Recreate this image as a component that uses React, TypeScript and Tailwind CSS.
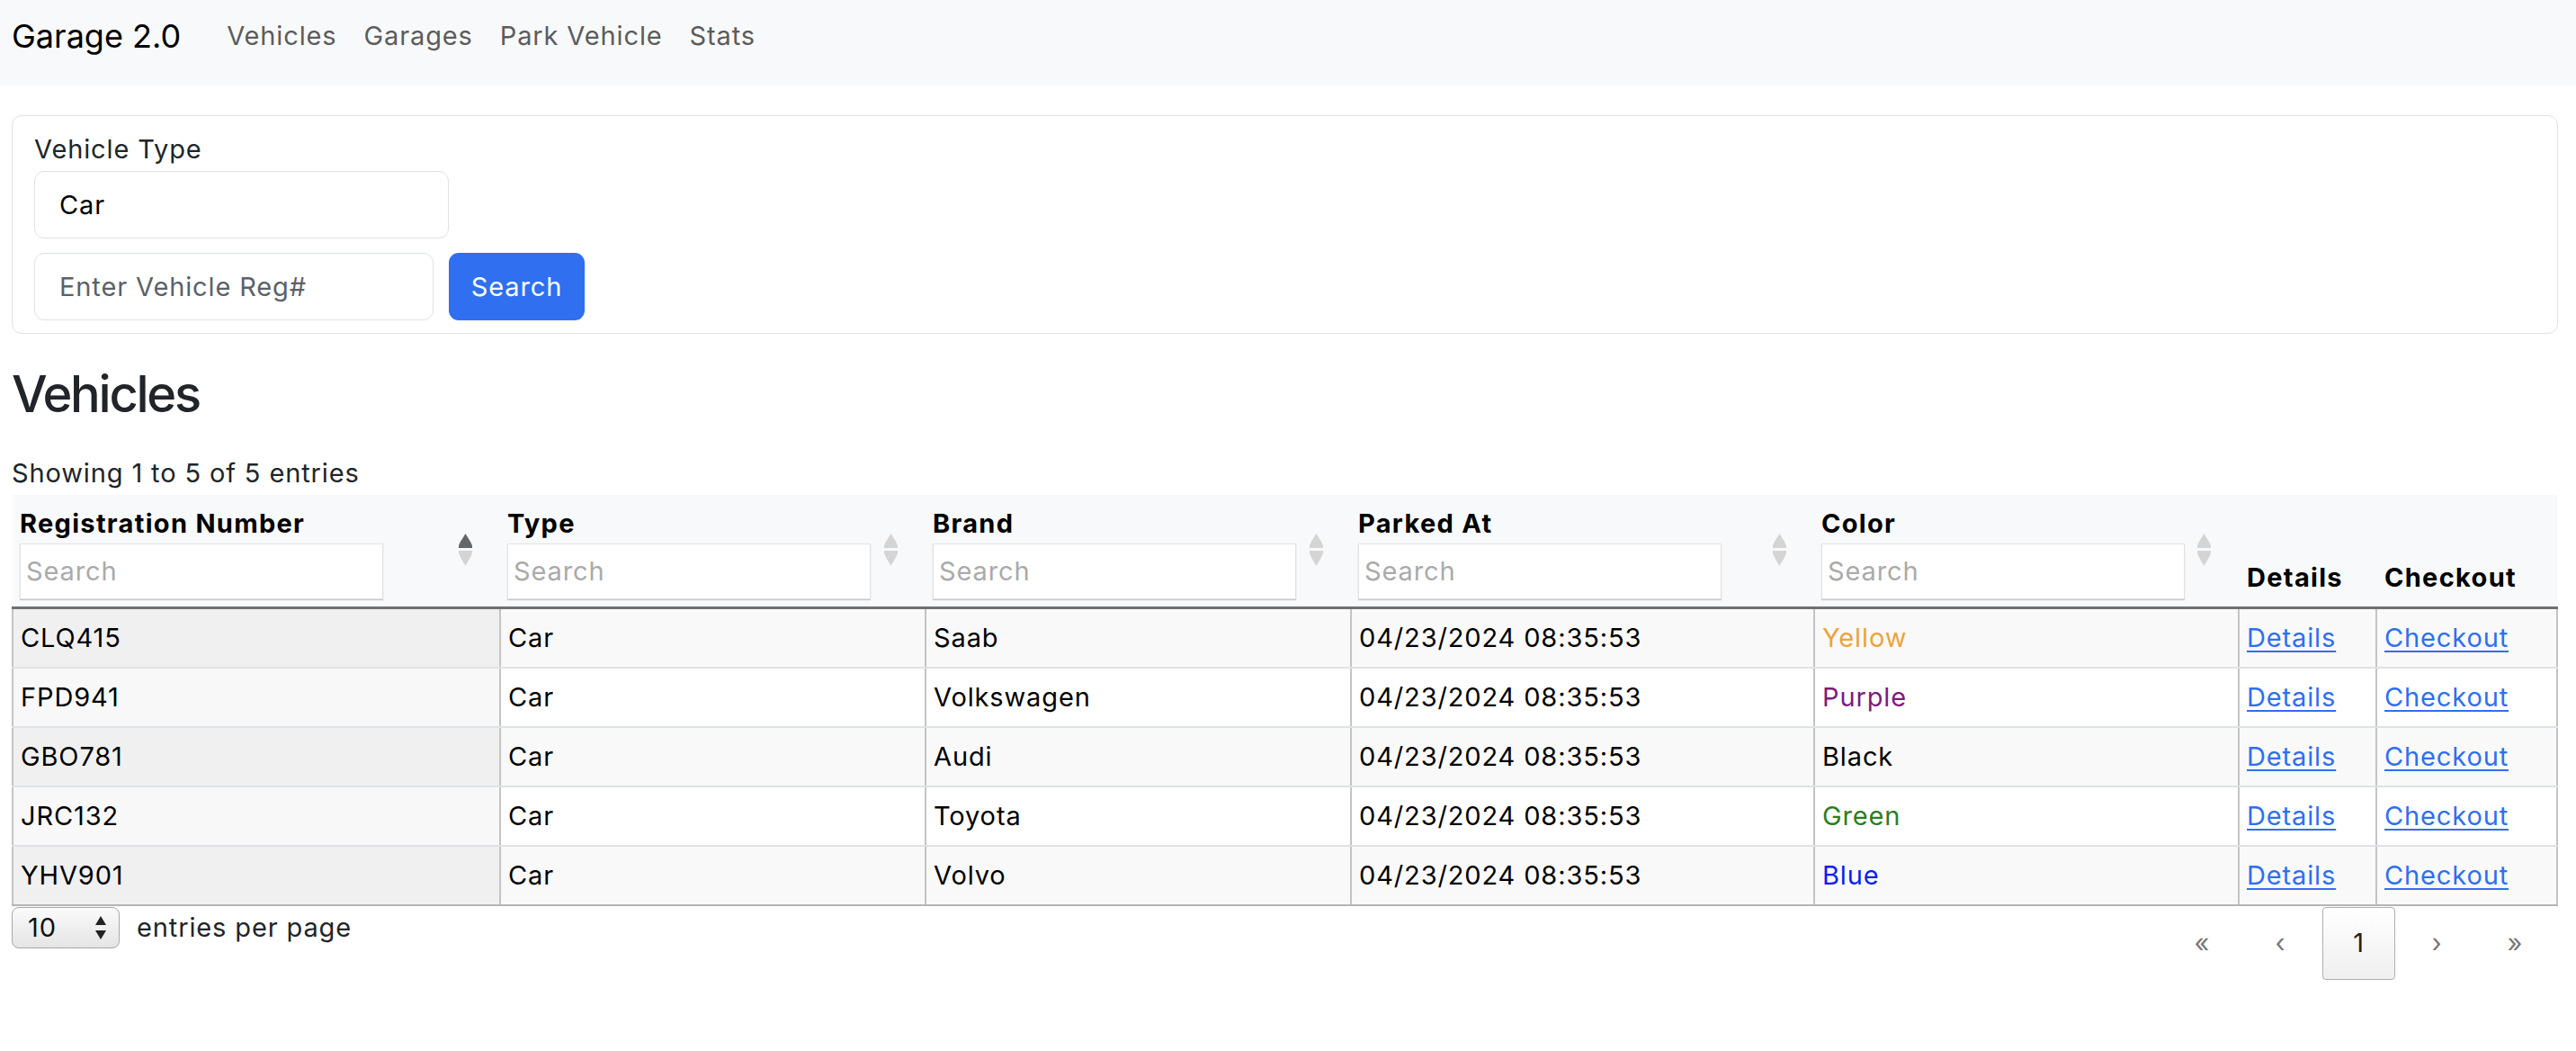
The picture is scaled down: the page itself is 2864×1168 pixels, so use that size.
import React from "react";

type Vehicle = {
    reg: string;
    type: string;
    brand: string;
    parkedAt: string;
    color: string;
    colorClass: string;
};

const vehicles: Vehicle[] = [
    { reg: "CLQ415", type: "Car", brand: "Saab", parkedAt: "04/23/2024 08:35:53", color: "Yellow", colorClass: "text-[#eca43a]" },
    { reg: "FPD941", type: "Car", brand: "Volkswagen", parkedAt: "04/23/2024 08:35:53", color: "Purple", colorClass: "text-[#7e1a7e]" },
    { reg: "GBO781", type: "Car", brand: "Audi", parkedAt: "04/23/2024 08:35:53", color: "Black", colorClass: "text-black" },
    { reg: "JRC132", type: "Car", brand: "Toyota", parkedAt: "04/23/2024 08:35:53", color: "Green", colorClass: "text-[#2b7d1f]" },
    { reg: "YHV901", type: "Car", brand: "Volvo", parkedAt: "04/23/2024 08:35:53", color: "Blue", colorClass: "text-[#0b1ff0]" },
];

const columns = ["Registration Number", "Type", "Brand", "Parked At", "Color"];

function SortArrows({ active }: { active: boolean }) {
    return (
        <svg width="15" height="37" viewBox="0 0 15 37" className="absolute right-[31px] top-[43px]">
            <path d="M7.5 0 C9 3 15 11 15 14 V16 H0 V14 C0 11 6 3 7.5 0Z" fill={active ? "#666666" : "#d4d4d4"} />
            <path d="M0 19 H15 V21 C15 24 9 33 7.5 36 C6 33 0 24 0 21Z" fill="#d4d4d4" />
        </svg>
    );
}

export default function App() {
    return (
        <div className="min-h-screen bg-white font-[Inter,'Liberation_Sans',sans-serif] text-[29px] leading-[1.5] tracking-[0.03em] text-[#212529]">
            {/* navbar */}
            <nav className="h-[95px] bg-[#f8f9fa] flex items-start pt-[13px] pl-[13px]">
                <span className="text-[36px] leading-[54px] tracking-normal text-black mr-[36px]">Garage 2.0</span>
                <div className="flex items-center h-[54px]">
                    {["Vehicles", "Garages", "Park Vehicle", "Stats"].map((l) => (
                        <a key={l} className="px-[15px] text-[#5c5c5c]">
                            {l}
                        </a>
                    ))}
                </div>
            </nav>

            <main className="pl-[13px] pr-[20px]">
                {/* search card */}
                <div className="mt-[33px] border border-[#dee2e6] rounded-[11px] pt-[15px] pb-[14px] pl-[24px]">
                    <div className="h-[44px] mb-[2px]">Vehicle Type</div>
                    <div className="w-[461px] h-[75px] border border-[#dee2e6] rounded-[11px] flex items-center pl-[27px] text-black">
                        Car
                    </div>
                    <div className="flex gap-[17px] mt-[16px]">
                        <div className="w-[444px] h-[75px] border border-[#dee2e6] rounded-[11px] flex items-center pl-[27px] text-[#5c6166]">
                            Enter Vehicle Reg#
                        </div>
                        <button className="w-[151px] h-[75px] rounded-[11px] bg-[#2f6ff0] text-white">Search</button>
                    </div>
                </div>

                <h2 className="mt-[32px] text-[56px] leading-[70px] tracking-[-0.04em] font-medium">Vehicles</h2>
                <div className="mt-[31px] h-[46px]">Showing 1 to 5 of 5 entries</div>

                {/* table */}
                <table className="w-full table-fixed border-collapse text-black">
                    <colgroup>
                        <col className="w-[542px]" />
                        <col className="w-[473px]" />
                        <col className="w-[473px]" />
                        <col className="w-[515px]" />
                        <col className="w-[472px]" />
                        <col className="w-[153px]" />
                        <col />
                    </colgroup>
                    <thead>
                        <tr className="bg-[#f8f9fa]">
                            {columns.map((c, i) => (
                                <th key={c} className="relative text-left align-bottom font-bold tracking-[0.045em] pt-[10px] pb-[8px] pl-[8px] border-b-[3px] border-[#707070]">
                                    <div className="h-[44px] leading-[44px]">{c}</div>
                                    <div className="w-[404px] h-[62px] bg-white border border-[#e2e2e2] shadow-[0_1px_1px_#c8c8c8] flex items-center pl-[6px] font-normal tracking-[0.03em] text-[#aaaaaa]">
                                        Search
                                    </div>
                                    <SortArrows active={i === 0} />
                                </th>
                            ))}
                            <th className="text-left align-bottom font-bold tracking-[0.045em] pl-[9px] pb-[11px] border-b-[3px] border-[#707070]">Details</th>
                            <th className="text-left align-bottom font-bold tracking-[0.045em] pl-[9px] pb-[11px] border-b-[3px] border-[#707070]">Checkout</th>
                        </tr>
                    </thead>
                    <tbody>
                        {vehicles.map((v, i) => {
                            const odd = i % 2 === 0;
                            const last = i === vehicles.length - 1;
                            const rowBg = odd ? "bg-[#f9f9f9]" : "bg-white";
                            const cell = `h-[66px] pl-[8px] border-x-2 border-x-[#c4c4c4] border-b-2 ${last ? "border-b-[#b4b4b4]" : "border-b-[#dee2e6]"}`;
                            return (
                                <tr key={v.reg} className={rowBg}>
                                    <td className={`${cell} ${odd ? "bg-[#f0f0f0]" : "bg-[#f8f8f8]"}`}>{v.reg}</td>
                                    <td className={cell}>{v.type}</td>
                                    <td className={cell}>{v.brand}</td>
                                    <td className={cell}>{v.parkedAt}</td>
                                    <td className={`${cell} ${v.colorClass}`}>{v.color}</td>
                                    <td className={cell}>
                                        <a className="text-[#2f6ff0] underline underline-offset-[4px]">Details</a>
                                    </td>
                                    <td className={cell}>
                                        <a className="text-[#2f6ff0] underline underline-offset-[4px]">Checkout</a>
                                    </td>
                                </tr>
                            );
                        })}
                    </tbody>
                </table>

                {/* footer */}
                <div className="flex justify-between items-start pt-[1px]">
                    <div className="flex items-center gap-[19px]">
                        <div className="w-[120px] h-[46px] rounded-[8px] border border-[#a8a8a8] bg-gradient-to-b from-[#fbfbfb] to-[#e4e4e4] flex items-center justify-between pl-[17px] pr-[14px] text-[#111]">
                            <span className="leading-none">10</span>
                            <svg width="12" height="26" viewBox="0 0 12 26">
                                <path d="M6 0 L12 10 H0 Z" fill="#222" />
                                <path d="M0 16 H12 L6 26 Z" fill="#222" />
                            </svg>
                        </div>
                        <span>entries per page</span>
                    </div>
                    <div className="flex gap-[6px] pr-[7px]">
                        <span className="w-[81px] h-[81px] flex items-center justify-center text-[#777]">«</span>
                        <span className="w-[81px] h-[81px] flex items-center justify-center text-[#777]">‹</span>
                        <span className="w-[81px] h-[81px] flex items-center justify-center rounded-[4px] border border-[#b0b0b0] bg-gradient-to-b from-white to-[#efefef] text-[#222]">
                            1
                        </span>
                        <span className="w-[81px] h-[81px] flex items-center justify-center text-[#777]">›</span>
                        <span className="w-[81px] h-[81px] flex items-center justify-center text-[#777]">»</span>
                    </div>
                </div>
            </main>
        </div>
    );
}
